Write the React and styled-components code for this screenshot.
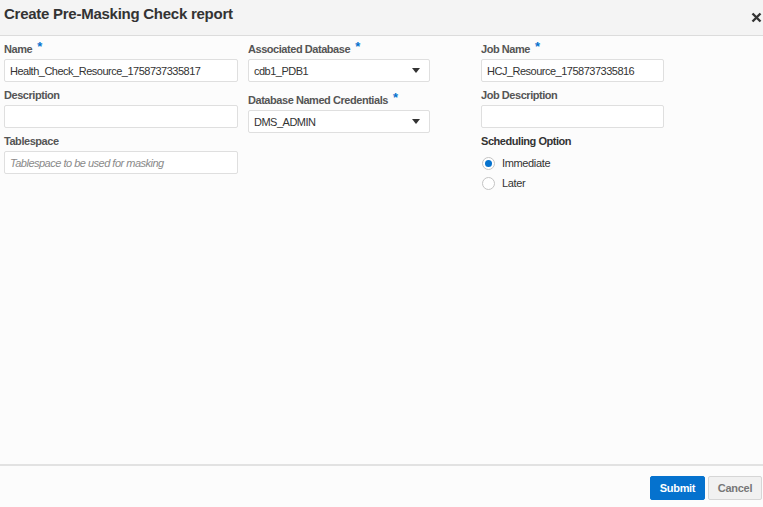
import React from "react";
import styled, { createGlobalStyle } from "styled-components";

const Global = createGlobalStyle`
  html, body { margin: 0; padding: 0; height: 100%; }
  body { font-family: "Liberation Sans", Arial, sans-serif; background: #fcfcfc; color: #333; }
  #root { height: 100%; }
  * { box-sizing: border-box; }
`;

const Dialog = styled.div`
  width: 763px;
  height: 507px;
  display: flex;
  flex-direction: column;
  background: #fcfcfc;
`;

const Header = styled.div`
  height: 36px;
  flex: none;
  display: flex;
  align-items: flex-start;
  justify-content: space-between;
  background: #f4f4f4;
  border-bottom: 1px solid #dcdcdc;
  padding: 4px 1px 0 4px;
`;

const Title = styled.h1`
  margin: 0;
  font-size: 15px;
  font-weight: bold;
  color: #333;
  line-height: 20px;
  letter-spacing: -0.26px;
`;

const Close = styled.button`
  border: none;
  background: transparent;
  padding: 0;
  margin-top: 8px;
  width: 11px;
  height: 11px;
  display: flex;
  align-items: center;
  justify-content: center;
  cursor: pointer;
`;

const Body = styled.div`
  flex: 1;
  display: flex;
  align-items: flex-start;
  padding: 0 0 0 4px;
`;

const Column = styled.div`
  width: ${(p) => p.$width}px;
  margin-right: ${(p) => p.$gap || 0}px;
  display: flex;
  flex-direction: column;
`;

const Field = styled.div`
  display: flex;
  flex-direction: column;
  margin-top: ${(p) => p.$top || 0}px;
`;

const Label = styled.label`
  height: 23px;
  display: flex;
  align-items: center;
  font-size: 11px;
  font-weight: bold;
  letter-spacing: -0.45px;
  color: ${(p) => (p.$dark ? "#333" : "#555")};
  padding-top: 3px;
`;

const Req = styled.span`
  color: #0572ce;
  font-size: 13px;
  margin-left: 5px;
  position: relative;
  top: -3px;
`;

const Input = styled.div`
  height: 23px;
  border: 1px solid #dfdfdf;
  border-radius: 2px;
  background: #fff;
  display: flex;
  align-items: center;
  padding: 0 5px;
  font-size: 11px;
  letter-spacing: -0.5px;
  color: ${(p) => (p.$placeholder ? "#8a8a8a" : "#333")};
  font-style: ${(p) => (p.$placeholder ? "italic" : "normal")};
  white-space: nowrap;
  overflow: hidden;
`;

const Select = styled(Input)`
  justify-content: space-between;
  padding-right: 9px;
`;

const Caret = styled.span`
  width: 0;
  height: 0;
  border-left: 4px solid transparent;
  border-right: 4px solid transparent;
  border-top: 5px solid #333;
`;

const RadioGroup = styled.div`
  display: flex;
  flex-direction: column;
  gap: 6px;
  margin-top: 5px;
`;

const RadioRow = styled.div`
  display: flex;
  align-items: center;
  height: 14px;
  font-size: 11px;
  letter-spacing: -0.35px;
  color: #333;
`;

const RadioCircle = styled.span`
  width: 13px;
  height: 13px;
  border-radius: 50%;
  border: 1px solid #c4c4c4;
  background: #fff;
  margin-right: 7px;
  margin-left: 1px;
  display: flex;
  align-items: center;
  justify-content: center;
  &::after {
    content: "";
    width: 7px;
    height: 7px;
    border-radius: 50%;
    background: #0572ce;
    display: ${(p) => (p.$checked ? "block" : "none")};
  }
`;

const Footer = styled.div`
  height: 43px;
  flex: none;
  border-top: 2px solid #e2e2e2;
  display: flex;
  justify-content: flex-end;
  align-items: flex-start;
  gap: 3px;
  padding: 10px 1px 0 0;
`;

const Button = styled.button`
  height: 24px;
  width: ${(p) => (p.$primary ? 55 : 54)}px;
  padding: 0;
  border-radius: 2px;
  font-family: "Liberation Sans", Arial, sans-serif;
  font-size: 11px;
  font-weight: bold;
  letter-spacing: -0.3px;
  cursor: pointer;
  border: 1px solid ${(p) => (p.$primary ? "#0572ce" : "#d6d6d6")};
  background: ${(p) => (p.$primary ? "#0572ce" : "#f1f1f1")};
  color: ${(p) => (p.$primary ? "#fff" : "#777")};
`;

function Radio({ checked, children }) {
  return (
    <RadioRow>
      <RadioCircle $checked={checked} />
      {children}
    </RadioRow>
  );
}

export default function App() {
  return (
    <>
      <Global />
      <Dialog>
        <Header>
          <Title>Create Pre-Masking Check report</Title>
          <Close aria-label="Close">
            <svg width="11" height="11" viewBox="0 0 11 11">
              <path d="M1.5 1.5 L9.5 9.5 M9.5 1.5 L1.5 9.5" stroke="#333" strokeWidth="2.4" />
            </svg>
          </Close>
        </Header>
        <Body>
          <Column $width={234} $gap={10}>
            <Field>
              <Label>
                Name<Req>*</Req>
              </Label>
              <Input>Health_Check_Resource_1758737335817</Input>
            </Field>
            <Field>
              <Label>Description</Label>
              <Input />
            </Field>
            <Field>
              <Label>Tablespace</Label>
              <Input $placeholder>Tablespace to be used for masking</Input>
            </Field>
          </Column>
          <Column $width={182} $gap={51}>
            <Field>
              <Label>
                Associated Database<Req>*</Req>
              </Label>
              <Select>
                cdb1_PDB1
                <Caret />
              </Select>
            </Field>
            <Field $top={5}>
              <Label>
                Database Named Credentials<Req>*</Req>
              </Label>
              <Select>
                DMS_ADMIN
                <Caret />
              </Select>
            </Field>
          </Column>
          <Column $width={183}>
            <Field>
              <Label>
                Job Name<Req>*</Req>
              </Label>
              <Input>HCJ_Resource_1758737335816</Input>
            </Field>
            <Field>
              <Label>Job Description</Label>
              <Input />
            </Field>
            <Field>
              <Label $dark>Scheduling Option</Label>
              <RadioGroup>
                <Radio checked>Immediate</Radio>
                <Radio>Later</Radio>
              </RadioGroup>
            </Field>
          </Column>
        </Body>
        <Footer>
          <Button $primary>Submit</Button>
          <Button>Cancel</Button>
        </Footer>
      </Dialog>
    </>
  );
}
